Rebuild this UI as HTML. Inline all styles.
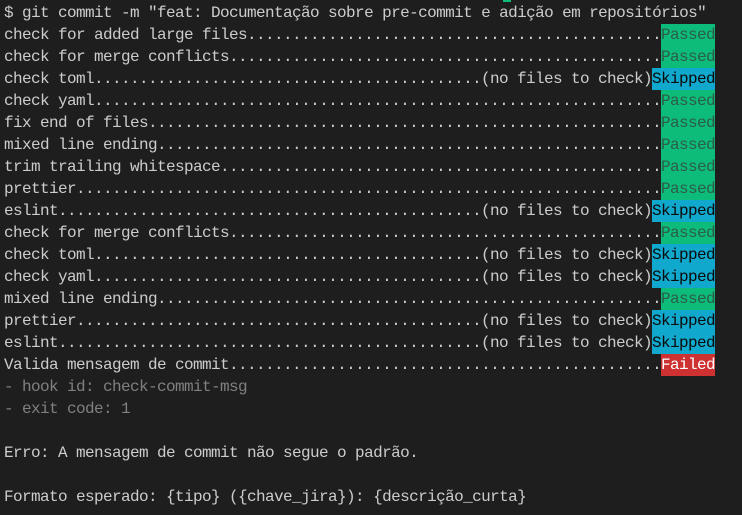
<!DOCTYPE html>
<html><head><meta charset="utf-8"><style>
html,body{margin:0;padding:0;background:#1e1e1e;width:742px;height:515px;overflow:hidden}
body{font-family:"Liberation Mono","DejaVu Sans Mono",monospace;font-size:16px;letter-spacing:-0.6px;color:#cccccc;position:relative}
.wrap{position:absolute;top:2px;left:4px;width:711px}
.l{height:22px;line-height:22px;white-space:pre;display:flex}
.d{flex:1;overflow:hidden;white-space:pre}
.p{background:#0dbc79;color:#2d5c47}
.s{background:#11a8cd;color:#0a0a0a}
.f{background:#cd3131;color:#ffffff}
.g{color:#808080}
</style></head><body>
<div style="position:absolute;left:503px;top:0;width:8px;height:2px;background:#0dbc79"></div>
<div class="wrap">
<div class="l">$ git commit -m "feat: Documentação sobre pre-commit e adição em repositórios"</div>
<div class="l"><span>check for added large files</span><span class="d">................................................................................</span><span class="p">Passed</span></div>
<div class="l"><span>check for merge conflicts</span><span class="d">................................................................................</span><span class="p">Passed</span></div>
<div class="l"><span>check toml</span><span class="d">................................................................................</span><span>(no files to check)</span><span class="s">Skipped</span></div>
<div class="l"><span>check yaml</span><span class="d">................................................................................</span><span class="p">Passed</span></div>
<div class="l"><span>fix end of files</span><span class="d">................................................................................</span><span class="p">Passed</span></div>
<div class="l"><span>mixed line ending</span><span class="d">................................................................................</span><span class="p">Passed</span></div>
<div class="l"><span>trim trailing whitespace</span><span class="d">................................................................................</span><span class="p">Passed</span></div>
<div class="l"><span>prettier</span><span class="d">................................................................................</span><span class="p">Passed</span></div>
<div class="l"><span>eslint</span><span class="d">................................................................................</span><span>(no files to check)</span><span class="s">Skipped</span></div>
<div class="l"><span>check for merge conflicts</span><span class="d">................................................................................</span><span class="p">Passed</span></div>
<div class="l"><span>check toml</span><span class="d">................................................................................</span><span>(no files to check)</span><span class="s">Skipped</span></div>
<div class="l"><span>check yaml</span><span class="d">................................................................................</span><span>(no files to check)</span><span class="s">Skipped</span></div>
<div class="l"><span>mixed line ending</span><span class="d">................................................................................</span><span class="p">Passed</span></div>
<div class="l"><span>prettier</span><span class="d">................................................................................</span><span>(no files to check)</span><span class="s">Skipped</span></div>
<div class="l"><span>eslint</span><span class="d">................................................................................</span><span>(no files to check)</span><span class="s">Skipped</span></div>
<div class="l"><span>Valida mensagem de commit</span><span class="d">................................................................................</span><span class="f">Failed</span></div>
<div class="l g">- hook id: check-commit-msg</div>
<div class="l g">- exit code: 1</div>
<div class="l"> </div>
<div class="l">Erro: A mensagem de commit não segue o padrão.</div>
<div class="l"> </div>
<div class="l">Formato esperado: {tipo} ({chave_jira}): {descrição_curta}</div>
</div>
</body></html>
